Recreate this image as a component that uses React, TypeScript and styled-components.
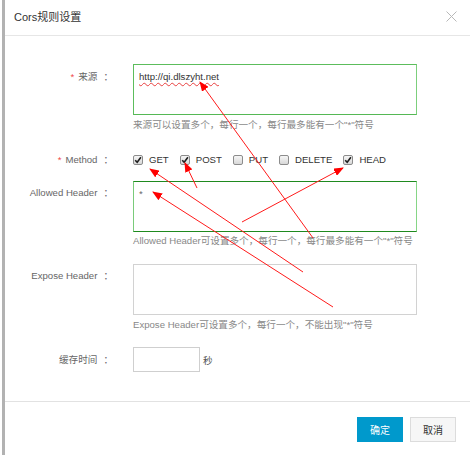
import React, { FC } from "react";
import styled, { createGlobalStyle } from "styled-components";

const GlobalStyle = createGlobalStyle`
  html, body {
    margin: 0;
    padding: 0;
    background: #fff;
  }
  body {
    font-family: "Liberation Sans", "Noto Sans CJK SC", sans-serif;
    font-size: 9.6px;
    color: #333;
  }
`;

const Page = styled.div`
  position: relative;
  width: 472px;
  height: 471px;
`;

const Dialog = styled.div`
  margin-left: 2px;
  width: 468px;
  height: 455px;
  box-sizing: border-box;
  border-left: 3px solid #b2b2b2;
  display: flex;
  flex-direction: column;
  background: #fff;
`;

const Header = styled.div`
  border-bottom: 1px solid #e6e6e6;
  display: flex;
  align-items: center;
  justify-content: space-between;
  padding: 0 13px 3px 9px;
  height: 32px;
`;

const Title = styled.div`
  font-size: 11px;
  color: #333;
`;

const Close = styled.span`
  width: 11px;
  height: 11px;
  display: block;
`;

const Body = styled.div`
  flex: 1;
  padding-top: 28px;
`;

const Row = styled.div<{ $gap: number; $center?: boolean }>`
  display: flex;
  align-items: ${(p) => (p.$center ? "center" : "flex-start")};
  margin-bottom: ${(p) => p.$gap}px;
`;

const Label = styled.div<{ $pad?: number }>`
  width: 108px;
  flex: none;
  margin-right: 20px;
  text-align: right;
  line-height: 12px;
  padding-top: ${(p) => p.$pad ?? 0}px;
  color: #666;
  white-space: nowrap;
`;

const Star = styled.span`
  color: #f04848;
  margin-right: 4px;
`;

const Colon = styled.span`
  margin-left: 6px;
`;

const Field = styled.div`
  display: flex;
  flex-direction: column;
`;

const TextBox = styled.div<{ $border: string }>`
  width: 284px;
  height: 51px;
  box-sizing: border-box;
  border: 1px solid;
  border-color: ${(p) => p.$border};
  padding: 6px 5px;
  line-height: 12px;
  color: #333;
`;

const Url = styled.span`
  text-decoration: underline wavy #e84040;
  text-decoration-thickness: 1px;
  text-underline-offset: 2px;
`;

const Hint = styled.div<{ $top: number }>`
  margin-top: ${(p) => p.$top}px;
  line-height: 12px;
  color: #888;
  white-space: nowrap;
`;

const Checks = styled.div`
  display: flex;
  align-items: center;
  gap: 11px;
  height: 14px;
`;

const CheckItem = styled.label`
  display: flex;
  align-items: center;
  color: #333;
  line-height: 12px;
`;

const Box = styled.span`
  width: 10px;
  height: 10px;
  box-sizing: border-box;
  border: 1px solid #8c8c8c;
  border-radius: 2px;
  background: linear-gradient(#f6f6f6, #d8d8d8);
  margin-right: 6px;
  display: flex;
  align-items: center;
  justify-content: center;
`;

const SmallInput = styled.div`
  width: 67px;
  height: 25px;
  box-sizing: border-box;
  border: 1px solid #cfcfcf;
`;

const Unit = styled.span`
  margin-left: 3px;
  color: #555;
`;

const Footer = styled.div`
  height: 54px;
  border-top: 1px solid #e2e2e2;
  display: flex;
  justify-content: flex-end;
  align-items: flex-start;
  gap: 7px;
  padding: 15px 14px 0 0;
  box-sizing: border-box;
`;

const Button = styled.button<{ $primary?: boolean }>`
  width: 46px;
  height: 25px;
  box-sizing: border-box;
  border: 1px solid ${(p) => (p.$primary ? "#0099cc" : "#dcdcdc")};
  background: ${(p) => (p.$primary ? "#0099cc" : "#f6f6f6")};
  color: ${(p) => (p.$primary ? "#fff" : "#333")};
  font-family: inherit;
  font-size: 10px;
  padding: 0;
`;

const Overlay = styled.svg`
  position: absolute;
  left: 0;
  top: 0;
  pointer-events: none;
`;

const Check: FC<{ label: string; checked?: boolean }> = ({ label, checked }) => (
  <CheckItem>
    <Box>
      {checked && (
        <svg width="8" height="8" viewBox="0 0 8 8">
          <path d="M1.2 4.2 L3.2 6.3 L6.9 1.3" fill="none" stroke="#1e1e1e" strokeWidth="1.6" />
        </svg>
      )}
    </Box>
    {label}
  </CheckItem>
);

// red annotation arrows: tail x, tail y, head x, head y
const arrows = [
  [313, 238, 200, 82],
  [242, 222, 343, 168],
  [197, 188, 185, 163],
  [303, 272, 150, 169],
  [333, 307, 153, 192],
];

const App: FC = () => (
  <Page>
    <GlobalStyle />
    <Dialog>
      <Header>
        <Title>Cors规则设置</Title>
        <Close>
          <svg width="11" height="11" viewBox="0 0 11 11">
            <path d="M0.5 0.5 L10.5 10.5 M10.5 0.5 L0.5 10.5" stroke="#b8b8b8" strokeWidth="1" />
          </svg>
        </Close>
      </Header>
      <Body>
        <Row $gap={22}>
          <Label $pad={7}>
            <Star>*</Star>来源<Colon>：</Colon>
          </Label>
          <Field>
            <TextBox $border="#5cbd5c #7ccf7c #55b855 #5cbd5c">
              <Url>http://qi.dlszyht.net</Url>
            </TextBox>
            <Hint $top={4}>来源可以设置多个，每行一个，每行最多能有一个"*"符号</Hint>
          </Field>
        </Row>
        <Row $gap={14} $center>
          <Label>
            <Star>*</Star>Method<Colon>：</Colon>
          </Label>
          <Checks>
            <Check label="GET" checked />
            <Check label="POST" checked />
            <Check label="PUT" />
            <Check label="DELETE" />
            <Check label="HEAD" checked />
          </Checks>
        </Row>
        <Row $gap={17}>
          <Label $pad={6}>
            Allowed Header<Colon>：</Colon>
          </Label>
          <Field>
            <TextBox $border="#1f8a1f #86d686 #1f8a1f #7acb7a">
              <span style={{ color: "#666" }}>*</span>
            </TextBox>
            <Hint $top={3}>Allowed Header可设置多个，每行一个，每行最多能有一个"*"符号</Hint>
          </Field>
        </Row>
        <Row $gap={16}>
          <Label $pad={6}>
            Expose Header<Colon>：</Colon>
          </Label>
          <Field>
            <TextBox $border="#d2d2d2" />
            <Hint $top={4}>Expose Header可设置多个，每行一个，不能出现"*"符号</Hint>
          </Field>
        </Row>
        <Row $gap={0} $center>
          <Label>
            缓存时间<Colon>：</Colon>
          </Label>
          <SmallInput />
          <Unit>秒</Unit>
        </Row>
      </Body>
      <Footer>
        <Button $primary>确定</Button>
        <Button>取消</Button>
      </Footer>
    </Dialog>
    <Overlay width="472" height="471" viewBox="0 0 472 471">
      <defs>
        <marker
          id="head"
          markerUnits="userSpaceOnUse"
          markerWidth="10"
          markerHeight="8"
          refX="9"
          refY="4"
          orient="auto"
        >
          <path d="M0 0 L10 4 L0 8 Z" fill="#ff0000" />
        </marker>
      </defs>
      {arrows.map(([x1, y1, x2, y2], i) => (
        <line key={i} x1={x1} y1={y1} x2={x2} y2={y2} stroke="#ff1a1a" strokeWidth="1" markerEnd="url(#head)" />
      ))}
    </Overlay>
  </Page>
);

export default App;
